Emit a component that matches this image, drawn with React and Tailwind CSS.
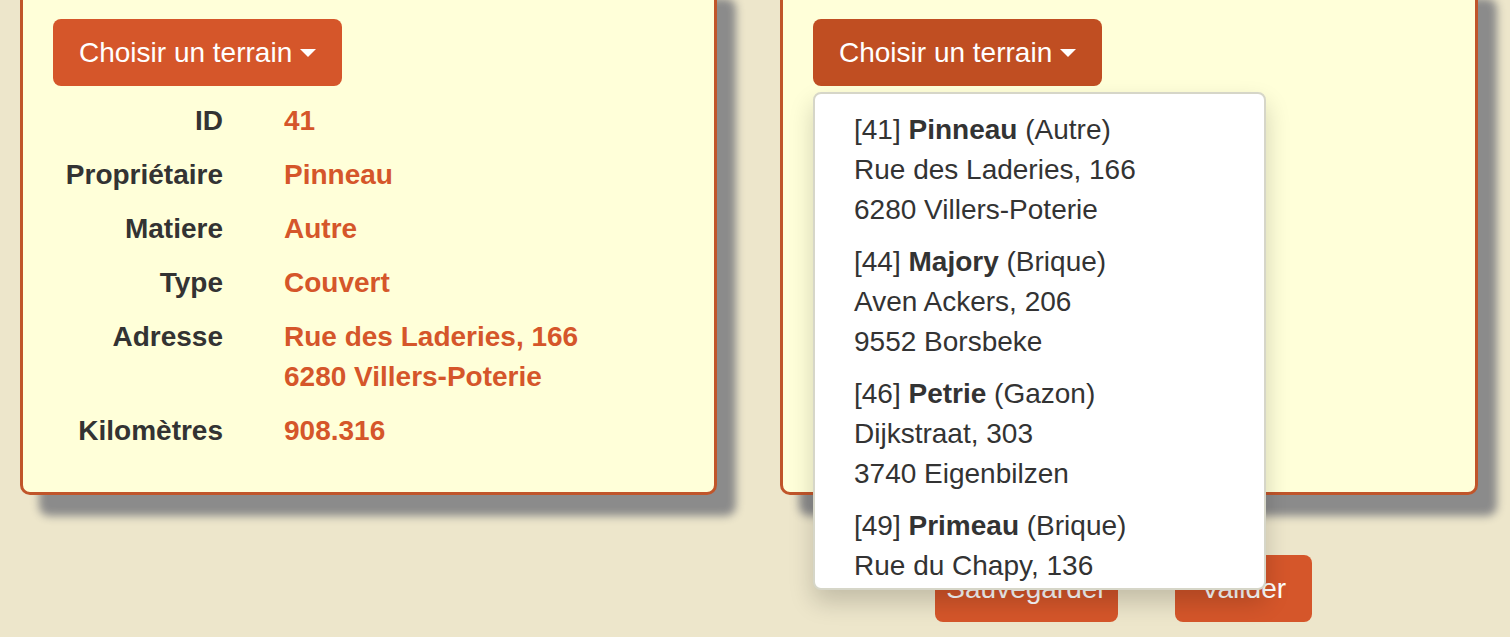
import { useState } from 'react';

const terrain = {
  id: 41,
  proprietaire: 'Pinneau',
  matiere: 'Autre',
  type: 'Couvert',
  adresse: ['Rue des Laderies, 166', '6280 Villers-Poterie'],
  km: '908.316',
};

const terrains = [
  { id: 41, nom: 'Pinneau', matiere: 'Autre', rue: 'Rue des Laderies, 166', ville: '6280 Villers-Poterie' },
  { id: 44, nom: 'Majory', matiere: 'Brique', rue: 'Aven Ackers, 206', ville: '9552 Borsbeke' },
  { id: 46, nom: 'Petrie', matiere: 'Gazon', rue: 'Dijkstraat, 303', ville: '3740 Eigenbilzen' },
  { id: 49, nom: 'Primeau', matiere: 'Brique', rue: 'Rue du Chapy, 136', ville: '5060 Sambreville' },
];

const Caret = () => (
  <svg width="16" height="8" viewBox="0 0 16 8" className="shrink-0">
    <path d="M0 0 L16 0 L8 8 Z" fill="currentColor" />
  </svg>
);

const ChoisirButton = ({ active, onClick }) => (
  <button
    onClick={onClick}
    className={`
      flex items-center gap-[8px]
      h-[67px] px-[26px]
      rounded-[8px]
      text-white text-[28px] leading-[40px]
      ${active ? 'bg-[#c04e22]' : 'bg-[#d5562a]'}
    `}
  >
    <span>Choisir un terrain</span>
    <Caret />
  </button>
);

const Row = ({ label, children }) => (
  <div className="grid grid-cols-[170px_1fr] gap-x-[61px]">
    <dt className="text-right font-bold text-[#333333]">{label}</dt>
    <dd className="font-bold text-[#d5562a]">{children}</dd>
  </div>
);

const Card = ({ wide, children }) => (
  <div
    className={`
      relative
      ${wide ? 'w-[698px]' : 'w-[697px]'}
      pt-[39px] pb-[41px] px-[30px]
      bg-[#ffffd9]
      border-[3px] border-[#c0552a]
      rounded-[10px]
      shadow-[19px_21px_8px_#8b8b8b]
    `}
  >
    {children}
  </div>
);

const Dropdown = () => (
  <div
    className="
      absolute left-[30px] top-[112px] z-10
      w-[453px] h-[498px]
      overflow-hidden
      py-[10px]
      bg-white
      border-2 border-[#d6d6c8]
      rounded-[8px]
      shadow-[0_12px_24px_rgba(0,0,0,0.18)]
    "
  >
    {terrains.map((t) => (
      <div key={t.id} className="px-[39px] py-[6px] text-[#333333]">
        <div>
          [{t.id}] <span className="font-bold">{t.nom}</span> ({t.matiere})
        </div>
        <div>{t.rue}</div>
        <div>{t.ville}</div>
      </div>
    ))}
  </div>
);

export default function App() {
  const [open, setOpen] = useState(true);

  return (
    <div
      className="h-[637px] overflow-hidden bg-[#ede6cb] text-[28px] leading-[40px]"
      style={{ fontFamily: '"Liberation Sans", Arial, sans-serif' }}
    >
      <div className="flex gap-[63px] pl-[20px] -mt-[23px]">
        {/* Terrain courant */}
        <Card>
          <ChoisirButton />
          <dl className="mt-[15px] flex flex-col gap-[14px]">
            <Row label="ID">{terrain.id}</Row>
            <Row label="Propriétaire">{terrain.proprietaire}</Row>
            <Row label="Matiere">{terrain.matiere}</Row>
            <Row label="Type">{terrain.type}</Row>
            <Row label="Adresse">
              {terrain.adresse.map((l) => (
                <div key={l}>{l}</div>
              ))}
            </Row>
            <Row label="Kilomètres">{terrain.km}</Row>
          </dl>
        </Card>

        {/* Nouveau terrain */}
        <Card wide>
          <ChoisirButton active={open} onClick={() => setOpen(!open)} />
          {open && <Dropdown />}
        </Card>
      </div>

      <div className="flex gap-[57px] mt-[60px] pl-[935px]">
        <button className="w-[183px] h-[67px] rounded-[8px] bg-[#d5562a] text-white">
          Sauvegarder
        </button>
        <button className="w-[137px] h-[67px] rounded-[8px] bg-[#d5562a] text-white">
          Valider
        </button>
      </div>
    </div>
  );
}
